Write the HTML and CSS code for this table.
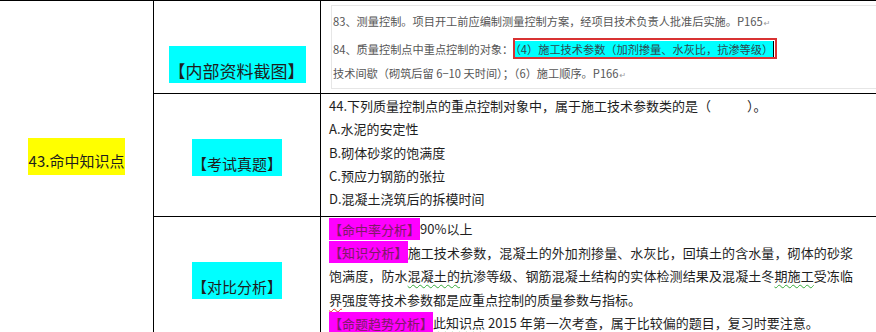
FILE: index.html
```html
<!DOCTYPE html>
<html lang="zh-CN">
<head>
<meta charset="utf-8">
<title>43.命中知识点</title>
<link rel="stylesheet" href="styles.css">
</head>
<body>
<div class="sheet">
  <div class="cell topic"><span class="hl-yellow">43.命中知识点</span></div>

  <div class="cell label row-line"><span class="hl-cyan big">【内部资料截图】</span></div>
  <div class="cell body row-line">
    <div class="shot">
      <p>83、测量控制。项目开工前应编制测量控制方案，经项目技术负责人批准后实施。P165<span class="ret">↵</span></p>
      <p>84、质量控制点中重点控制的对象：<span class="mark"><span class="mark-fill">（4）施工技术参数（加剂掺量、水灰比，抗渗等级）</span></span></p>
      <p>技术间歇（砌筑后留 6−10 天时间）；（6）施工顺序。P166<span class="ret">↵</span></p>
    </div>
  </div>

  <div class="cell label row-line"><span class="hl-cyan">【考试真题】</span></div>
  <div class="cell body row-line question">
    <p>44.下列质量控制点的重点控制对象中，属于施工技术参数类的是（<span class="blank"></span>）。</p>
    <p>A.水泥的安定性</p>
    <p>B.砌体砂浆的饱满度</p>
    <p>C.预应力钢筋的张拉</p>
    <p>D.混凝土浇筑后的拆模时间</p>
  </div>

  <div class="cell label"><span class="hl-cyan">【对比分析】</span></div>
  <div class="cell body analysis">
    <p><span class="hl-magenta">【命中率分析】</span>90%以上</p>
    <p class="justify"><span class="hl-magenta">【知识分析】</span>施工技术参数，混凝土的外加剂掺量、水灰比，回填土的含水量，砌体的砂浆饱满度，防水<span class="wave-g">混凝土的</span>抗渗等级、钢筋混凝土结构的实体检测结果及混凝土冬<span class="wave-g">期施工</span>受冻临<span class="wave-r">界</span>强度等技术参数都是应重点控制的质量参数与指标。</p>
    <p><span class="hl-magenta">【命题趋势分析】</span><span class="wave-g">此知识点</span> 2015 年第一次考查，属于比较偏的题目，复习时要注意。</p>
  </div>
</div>
</body>
</html>
```

FILE: styles.css
```css
* {
  box-sizing: border-box;
}

html, body {
  margin: 0;
  padding: 0;
  background: #ffffff;
}

body {
  width: 876px;
  height: 332px;
  overflow: hidden;
  font-family: "Noto Sans CJK SC", "Noto Sans", sans-serif;
  color: #1e1e1e;
}

p {
  margin: 0;
}

.sheet {
  display: grid;
  grid-template-columns: 154px 167px 555px;
  grid-template-rows: 93px 123px 1fr;
  height: 332px;
  border-top: 1px solid #000;
}

.topic {
  grid-row: 1 / span 3;
  border-right: 1px solid #000;
  padding-top: 137px;
  text-align: center;
}

.hl-yellow {
  display: inline-block;
  background: #ffff00;
  font-size: 15px;
  line-height: 23px;
  padding: 11px 1px 3px;
}

.label {
  border-right: 1px solid #000;
  padding-top: 45px;
  text-align: center;
}

.row-line {
  border-bottom: 1px solid #000;
}

.hl-cyan {
  display: inline-block;
  background: #00ffff;
  font-size: 15px;
  line-height: 23px;
  padding: 13px 0 1px;
}

.hl-cyan.big {
  font-size: 17px;
  padding: 13px 1px 1px 0;
}

.body {
  padding-left: 8px;
}

/* screenshot of the handout */
.shot {
  margin: 4px 0 0 2px;
  height: 84px;
  border: 1px solid #e6e6e6;
  border-right: none;
  padding: 3px 0 0 1px;
  font-size: 11.2px;
  line-height: 24.5px;
  color: #565656;
  white-space: nowrap;
}

.ret {
  font-family: "DejaVu Sans", sans-serif;
  font-size: 8px;
  color: #9a9a9a;
  margin-left: 1px;
}

.mark {
  border: 2px solid #d83232;
  padding: 0.5px 1px 0.5px 0;
}

.mark-fill {
  background: #00ffff;
  color: #2c4a50;
  border-right: 1px solid #000;
}

/* exam question */
.question {
  font-size: 13px;
  line-height: 23.3px;
  color: #1e1e1e;
}

.blank {
  display: inline-block;
  width: 36px;
}

/* analysis */
.analysis {
  font-size: 13px;
  line-height: 23.5px;
  padding-right: 23px;
  color: #1e1e1e;
}

.justify {
  text-align: justify;
}

.hl-magenta {
  background: #ff00ff;
  color: #7e1a66;
  padding: 1.5px 0;
}

.wave-g {
  text-decoration: underline wavy #36a93a;
  text-decoration-thickness: 1px;
  text-underline-offset: 3px;
}

.wave-r {
  text-decoration: underline wavy #e0302a;
  text-decoration-thickness: 1px;
  text-underline-offset: 3px;
}
```
